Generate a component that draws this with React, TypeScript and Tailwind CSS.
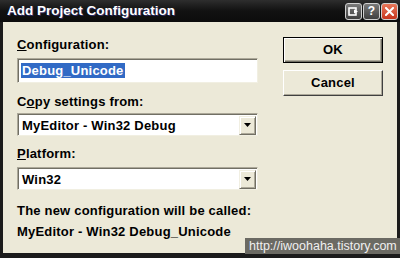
import React from "react";

const font = { fontFamily: '"Liberation Sans", Arial, sans-serif' };

function TitleButton({ kind }: { kind: "roll" | "help" | "close" }) {
  const bg =
    kind === "close"
      ? "bg-gradient-to-b from-[#e8775a] to-[#c8341c]"
      : "bg-gradient-to-b from-[#7a7a7a] to-[#404040]";
  return (
    <div
      className={`w-[17px] h-[17px] rounded-[3px] border border-[#d0d0d0] ${bg} flex items-center justify-center`}
    >
      {kind === "roll" && (
        <svg width="11" height="9" viewBox="0 0 11 9">
          <rect x="1" y="1" width="7" height="7" fill="none" stroke="#fff" strokeWidth="1.6" />
          <path d="M6 2.5 L10 4.5 L6 6.5 Z" fill="#fff" />
        </svg>
      )}
      {kind === "help" && (
        <span className="text-white font-bold text-[12px] leading-none" style={font}>
          ?
        </span>
      )}
      {kind === "close" && (
        <svg width="9" height="9" viewBox="0 0 9 9">
          <path d="M1 1 L8 8 M8 1 L1 8" stroke="#fff" strokeWidth="2" strokeLinecap="square" />
        </svg>
      )}
    </div>
  );
}

function Label({ children }: { children: React.ReactNode }) {
  return (
    <div className="h-[16px] leading-[16px] text-[13px] tracking-[0.2px] font-bold text-black whitespace-nowrap">
      {children}
    </div>
  );
}

const sunken =
  "border-t border-l border-t-[#aca899] border-l-[#aca899] border-b border-r border-b-[#f1efe2] border-r-[#f1efe2] shadow-[inset_1px_1px_0_#716f64]";

function Select({ value }: { value: string }) {
  return (
    <div className={`w-[241px] h-[23px] bg-white flex items-center ${sunken}`}>
      <div className="flex-1 pl-[4px] pt-[1px] text-[13px] tracking-[0.2px] font-bold text-black leading-none whitespace-nowrap">
        {value}
      </div>
      <div className="w-[17px] h-[19px] mr-[1px] mt-[1px] bg-[#ece9d8] border-t border-l border-t-[#f1efe2] border-l-[#f1efe2] border-b border-r border-b-[#716f64] border-r-[#716f64] shadow-[inset_1px_1px_0_#fff,inset_-1px_-1px_0_#aca899] flex items-center justify-center">
        <svg width="7" height="4" viewBox="0 0 7 4">
          <path d="M0 0 H7 L3.5 4 Z" fill="#000" />
        </svg>
      </div>
    </div>
  );
}

function Button({ children, def }: { children: React.ReactNode; def?: boolean }) {
  return (
    <div
      className={`w-[100px] h-[26px] bg-[#ece9d8] flex items-center justify-center text-[13px] tracking-[0.2px] font-bold text-black ${
        def
          ? "border border-black shadow-[inset_1px_1px_0_#fff,inset_-1px_-1px_0_#716f64,inset_-2px_-2px_0_#aca899]"
          : "border-t border-l border-t-white border-l-white border-b border-r border-b-[#404040] border-r-[#404040] shadow-[inset_-1px_-1px_0_#aca899]"
      }`}
    >
      {children}
    </div>
  );
}

export default function App() {
  return (
    <div className="relative w-[400px] h-[258px] bg-[#1b1b1b] flex flex-col overflow-hidden" style={font}>
      <div className="h-[22px] flex items-center pl-[7px] pr-[2px] bg-gradient-to-b from-[#2e2e2e] via-[#111] to-[#0c0c0c]">
        <div className="flex-1 text-white font-bold text-[13.5px] leading-none [text-shadow:1px_1px_0_#2b2b66]">
          Add Project Configuration
        </div>
        <div className="flex gap-[1px]">
          <TitleButton kind="roll" />
          <TitleButton kind="help" />
          <TitleButton kind="close" />
        </div>
      </div>
      <div className="flex-1 mx-[3px] mb-[5px] bg-[#ece9d8] flex pt-[15px] pl-[14px]">
        <div className="w-[241px] flex flex-col">
          <Label>
            <span className="underline">C</span>onfiguration:
          </Label>
          <div className={`mt-[5px] w-[241px] h-[25px] bg-white flex items-center pl-[3px] ${sunken}`}>
            <span className="bg-[#316ac5] text-white text-[13px] tracking-[0.2px] font-bold leading-[15px] h-[15px] px-[1px]">
              Debug_Unicode
            </span>
          </div>
          <div className="mt-[11px]">
            <Label>
              C<span className="underline">o</span>py settings from:
            </Label>
          </div>
          <div className="mt-[3px]">
            <Select value="MyEditor - Win32 Debug" />
          </div>
          <div className="mt-[10px]">
            <Label>
              <span className="underline">P</span>latform:
            </Label>
          </div>
          <div className="mt-[5px]">
            <Select value="Win32" />
          </div>
          <div className="mt-[13px]">
            <Label>The new configuration will be called:</Label>
          </div>
          <div className="mt-[5px]">
            <Label>MyEditor - Win32 Debug_Unicode</Label>
          </div>
        </div>
        <div className="ml-[25px] flex flex-col">
          <Button def>OK</Button>
          <div className="mt-[7px]">
            <Button>Cancel</Button>
          </div>
        </div>
      </div>
      <div className="absolute right-0 top-[238px] w-[155px] h-[16px] bg-[#6b6a63] text-[#f0f0f0] text-[12.5px] leading-[16px] pl-[4px] whitespace-nowrap">
        http://iwoohaha.tistory.com
      </div>
    </div>
  );
}
